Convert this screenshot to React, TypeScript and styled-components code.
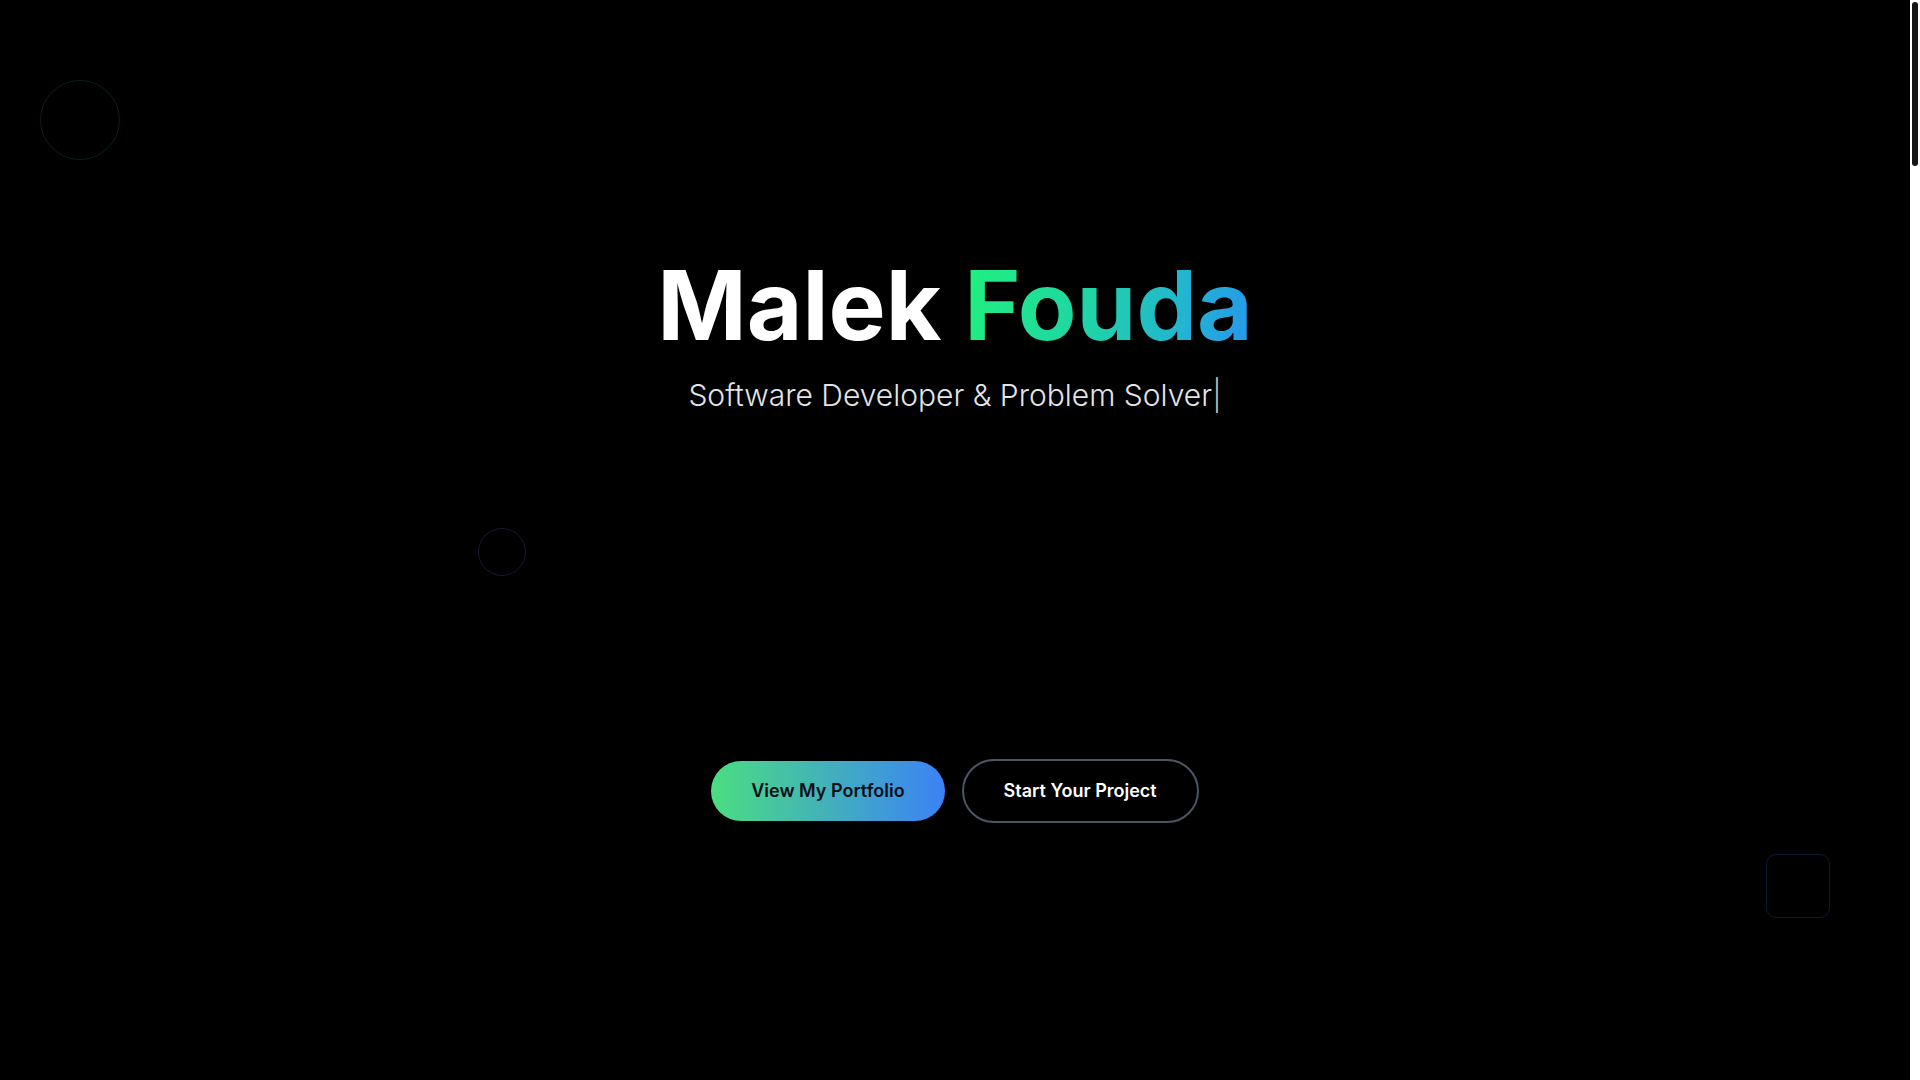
import React from "react";
import styled, { createGlobalStyle } from "styled-components";

const GlobalStyle = createGlobalStyle`
  html, body {
    margin: 0;
    padding: 0;
    height: 100%;
    overflow: hidden;
    background: #000;
  }
  body {
    font-family: Inter, "Noto Sans", "Liberation Sans", sans-serif;
    color: #fff;
    -webkit-font-smoothing: antialiased;
  }
`;

const Scroller = styled.div`
  height: 100vh;
  overflow-y: scroll;
  background: #000;
  scrollbar-width: none;

  &::-webkit-scrollbar {
    display: none;
  }
`;

const ScrollRail = styled.div`
  position: fixed;
  top: 0;
  right: 0;
  width: 10px;
  height: 100vh;
  background: #ffffff;
  z-index: 10;
`;

const ScrollThumb = styled.div`
  position: absolute;
  top: 2px;
  left: 2px;
  right: 2px;
  height: 164px;
  border-radius: 4px;
  background: #161616;
`;

const Page = styled.main`
  position: relative;
  margin-right: 10px;
  background: #000;
  overflow: hidden;
`;

const Hero = styled.section`
  position: relative;
  min-height: 100vh;
  display: flex;
  flex-direction: column;
  align-items: center;
  justify-content: center;
`;

const Shape = styled.div<{ $kind: "circle" | "square"; $color: string; $size: number }>`
  position: absolute;
  width: ${(p) => p.$size}px;
  height: ${(p) => p.$size}px;
  border: 1px solid ${(p) => p.$color};
  border-radius: ${(p) => (p.$kind === "circle" ? "50%" : "10px")};
  box-sizing: border-box;
  pointer-events: none;
`;

const GreenCircle = styled(Shape)`
  left: 40px;
  top: 80px;
`;

const PurpleCircle = styled(Shape)`
  left: 478px;
  top: 528px;
`;

const BlueSquare = styled(Shape)`
  right: 80px;
  top: 854px;
`;

const Content = styled.div`
  display: flex;
  flex-direction: column;
  align-items: center;
  text-align: center;
`;

const Title = styled.h1`
  margin: 0 0 24px;
  font-size: 96px;
  line-height: 1;
  font-weight: 700;
  letter-spacing: 0;
  color: #fff;
`;

const GradientName = styled.span`
  background: linear-gradient(100deg, #1ff27c 0%, #1fd3a8 45%, #22b4d2 75%, #2795ec 100%);
  -webkit-background-clip: text;
  background-clip: text;
  color: transparent;
`;

const Subtitle = styled.p`
  margin: 0;
  font-size: 30px;
  line-height: 36px;
  font-weight: 300;
  color: #e2e4e9;
`;

const Cursor = styled.span`
  color: #b8bcc4;
  font-weight: 300;
`;

const Spacer = styled.div`
  height: 346px;
`;

const Actions = styled.div`
  display: flex;
  align-items: center;
  gap: 17px;
`;

const Button = styled.a<{ $variant: "primary" | "outline" }>`
  display: inline-flex;
  align-items: center;
  justify-content: center;
  padding: 16px 40px;
  border-radius: 999px;
  font-size: 18px;
  line-height: 28px;
  font-weight: 600;
  text-decoration: none;
  cursor: pointer;
  ${(p) =>
    p.$variant === "primary"
      ? `
    background: linear-gradient(90deg, #4ade80 0%, #3b82f6 100%);
    color: #0b0f17;
  `
      : `
    background: transparent;
    color: #ffffff;
    border: 2px solid #4b5563;
  `}
`;

const Filler = styled.section`
  height: 6020px;
`;

export default function App() {
  return (
    <>
      <GlobalStyle />
      <Scroller>
        <Page>
          <Hero>
            <GreenCircle $kind="circle" $size={80} $color="rgba(34, 197, 94, 0.18)" />
            <PurpleCircle $kind="circle" $size={48} $color="rgba(139, 92, 246, 0.22)" />
            <BlueSquare $kind="square" $size={64} $color="rgba(59, 130, 246, 0.2)" />
            <Content>
              <Title>
                Malek <GradientName>Fouda</GradientName>
              </Title>
              <Subtitle>
                Software Developer &amp; Problem Solver<Cursor>|</Cursor>
              </Subtitle>
              <Spacer />
              <Actions>
                <Button $variant="primary">View My Portfolio</Button>
                <Button $variant="outline">Start Your Project</Button>
              </Actions>
            </Content>
          </Hero>
          <Filler />
        </Page>
      </Scroller>
      <ScrollRail>
        <ScrollThumb />
      </ScrollRail>
    </>
  );
}
